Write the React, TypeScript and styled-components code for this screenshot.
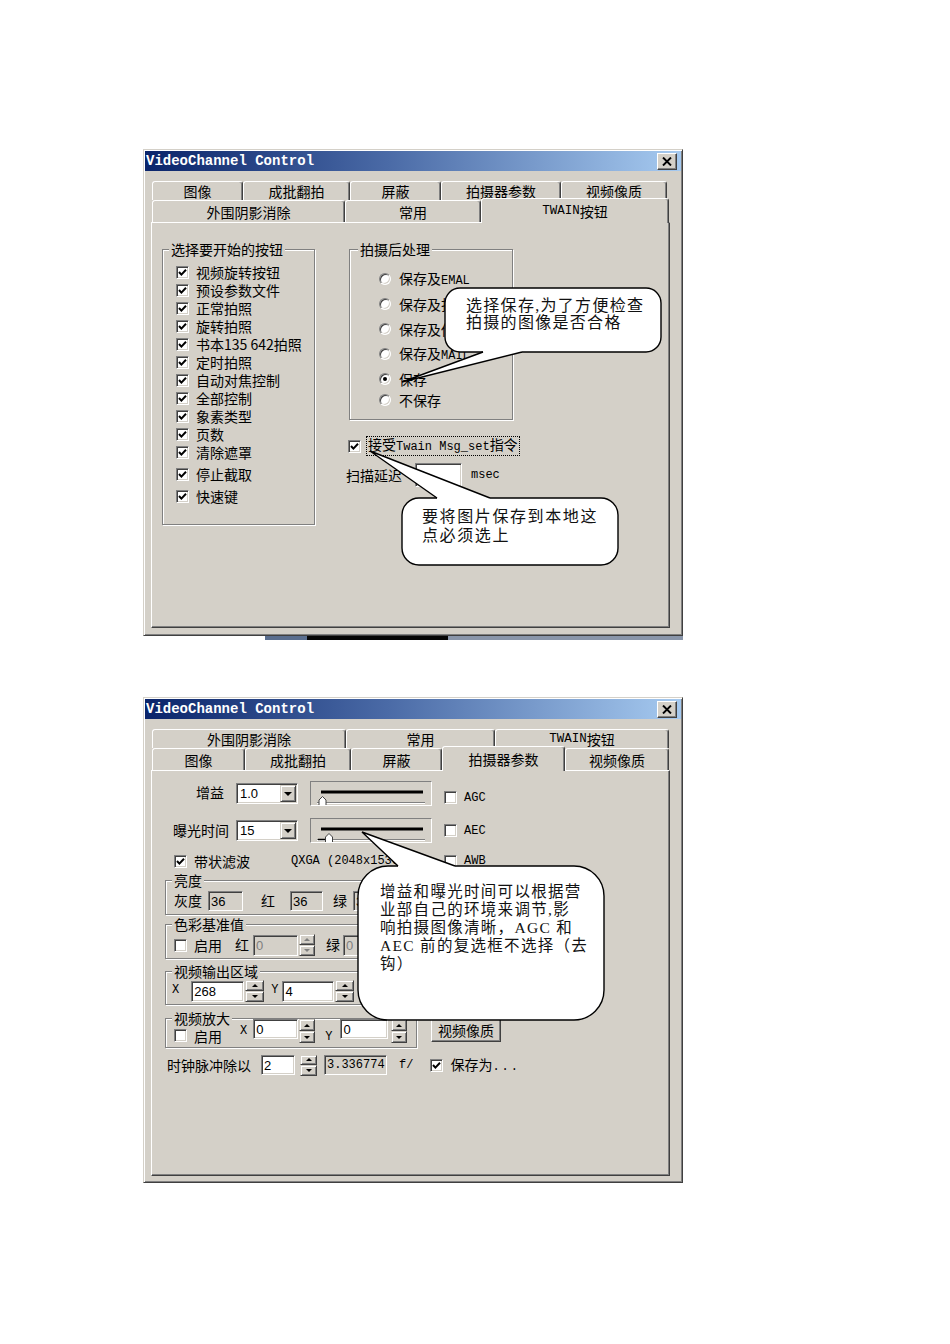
import React from "react";
import styled, { createGlobalStyle, css } from "styled-components";

const FACE = "#d4d0c8";
const SHADOW = "#808080";
const DARK = "#404040";
const UI_FONT = `"Noto Sans CJK SC", "Liberation Sans", sans-serif`;
const MONO_FONT = `"Liberation Mono", "Noto Sans CJK SC", monospace`;
const NOTE_FONT = `"Liberation Serif", "Noto Sans CJK SC", serif`;

type Sp = { $ml?: number; $mt?: number };
const spacing = css<Sp>`
  margin-left: ${(p) => p.$ml ?? 0}px;
  margin-top: ${(p) => p.$mt ?? 0}px;
`;

const GlobalStyle = createGlobalStyle`
  html, body { margin: 0; padding: 0; background: #ffffff; }
  body { font-family: ${UI_FONT}; font-size: 14px; color: #000; }
  * { box-sizing: border-box; }
`;

const Page = styled.div`
  width: 950px;
  min-height: 1344px;
  padding: 149px 0 0 143px;
  display: flex;
  flex-direction: column;
`;

const Shot = styled.div<{ $mt?: number }>`
  display: flex;
  flex-direction: column;
  width: 540px;
  margin-top: ${(p) => p.$mt ?? 0}px;
`;

const TaskStrip = styled.div`
  height: 4px;
  margin-left: 122px;
  width: 418px;
  background: linear-gradient(
    90deg,
    #5a6e8e 0 42px,
    #060606 42px 183px,
    #8a96aa 183px 100%
  );
`;

const Window = styled.div<{ $h: number }>`
  position: relative;
  width: 540px;
  height: ${(p) => p.$h}px;
  padding: 1px;
  background: ${FACE};
  border: 1px solid;
  border-color: ${FACE} ${DARK} ${DARK} ${FACE};
  box-shadow: inset 1px 1px #fff, inset -1px -1px ${SHADOW};
  display: flex;
  flex-direction: column;
`;

const TitleBar = styled.div`
  flex: none;
  height: 20px;
  display: flex;
  align-items: center;
  justify-content: space-between;
  padding: 0 4px 0 1px;
  background: linear-gradient(90deg, #0a246a 0%, #4a6aa6 45%, #a6caf0 100%);
`;

const TitleText = styled.span`
  font-family: "Liberation Mono", monospace;
  font-weight: bold;
  font-size: 14px;
  line-height: 20px;
  color: #fff;
  white-space: pre;
`;

const CloseButton = styled.span`
  width: 20px;
  height: 17px;
  background: ${FACE};
  border: 1px solid;
  border-color: #fff ${DARK} ${DARK} #fff;
  box-shadow: inset -1px -1px ${SHADOW};
  display: flex;
  align-items: center;
  justify-content: center;
`;

const Body = styled.div`
  flex: 1;
  display: flex;
  flex-direction: column;
  padding: 10px 10px 0 6px;
`;

const TabRow = styled.div<{ $h: number }>`
  flex: none;
  display: flex;
  align-items: flex-end;
  height: ${(p) => p.$h}px;
  padding-left: 1px;
`;

const Tab = styled.div<{ $w: number; $h: number; $selected?: boolean }>`
  flex: none;
  position: relative;
  z-index: ${(p) => (p.$selected ? 2 : 0)};
  width: ${(p) => p.$w}px;
  height: ${(p) => p.$h + (p.$selected ? 3 : 0)}px;
  margin-bottom: ${(p) => (p.$selected ? -1 : 0)}px;
  display: flex;
  align-items: center;
  justify-content: center;
  background: ${FACE};
  border-style: solid;
  border-width: 1px 1px 0 1px;
  border-color: #fff ${DARK} transparent #fff;
  border-radius: 3px 3px 0 0;
  box-shadow: inset -1px 0 ${SHADOW};
  font-size: 14px;
  line-height: 16px;
  white-space: nowrap;
`;

const Panel = styled.div`
  flex: none;
  width: 519px;
  height: 406px;
  border: 1px solid;
  border-color: #fff ${DARK} ${DARK} #fff;
  box-shadow: inset -1px -1px ${SHADOW};
`;

const Latin = styled.span<{ $size?: number; $ls?: number }>`
  font-family: ${MONO_FONT};
  font-size: ${(p) => p.$size ?? 12}px;
  letter-spacing: ${(p) => p.$ls ?? 0}px;
`;

const Label = styled.span<Sp & { $w?: number; $pr?: number }>`
  ${spacing}
  flex: none;
  ${(p) => (p.$w ? `width: ${p.$w}px; text-align: right;` : "")}
  padding-right: ${(p) => p.$pr ?? 0}px;
  font-size: 14px;
  line-height: 18px;
  white-space: nowrap;
`;

const Mono = styled.span<Sp>`
  ${spacing}
  flex: none;
  font-family: ${MONO_FONT};
  font-size: 12px;
  line-height: 16px;
  white-space: pre;
`;

const BoxFrame = styled.span<Sp>`
  ${spacing}
  flex: none;
  width: 13px;
  height: 13px;
  background: #fff;
  border: 1px solid;
  border-color: ${SHADOW} #fff #fff ${SHADOW};
  box-shadow: inset 1px 1px ${DARK}, inset -1px -1px ${FACE};
  display: inline-flex;
  align-items: center;
  justify-content: center;
`;

const RadioFrame = styled.span`
  flex: none;
  width: 12px;
  height: 12px;
  border-radius: 50%;
  background: #fff;
  border: 1px solid;
  border-color: ${SHADOW} #fff #fff ${SHADOW};
  box-shadow: inset 1px 1px ${DARK}, inset -1px -1px ${FACE};
  display: inline-flex;
  align-items: center;
  justify-content: center;
`;

const RadioDot = styled.span`
  width: 4px;
  height: 4px;
  border-radius: 50%;
  background: #000;
`;

const GroupBox = styled.div<Sp & { $w: number; $h?: number }>`
  ${spacing}
  flex: none;
  width: ${(p) => p.$w}px;
  ${(p) => (p.$h ? `height: ${p.$h}px;` : "")}
  border: 1px solid ${SHADOW};
  box-shadow: inset 1px 1px #fff, 1px 1px #fff;
  display: flex;
  flex-direction: column;
`;

const Caption = styled.div<{ $indent: number }>`
  align-self: flex-start;
  margin: -9px 0 -7px ${(p) => p.$indent}px;
  padding: 0 2px;
  background: ${FACE};
  font-size: 14px;
  line-height: 16px;
  white-space: nowrap;
`;

/* ---------- TWAIN page ---------- */

const TwainLayout = styled.div`
  display: flex;
  align-items: flex-start;
  gap: 31px;
  padding: 26px 0 0 10px;
`;

const CheckList = styled.div`
  display: flex;
  flex-direction: column;
  padding: 13px 0 0 13px;
`;

const ItemRow = styled.div<Sp & { $gap?: number }>`
  ${spacing}
  display: flex;
  align-items: center;
  height: 18px;
  gap: ${(p) => p.$gap ?? 7}px;
`;

const RadioList = styled.div`
  display: flex;
  flex-direction: column;
  gap: 7px;
  padding: 20px 0 0 29px;
`;

const SideColumn = styled.div`
  display: flex;
  flex-direction: column;
  align-items: flex-start;
`;

const FocusLabel = styled.span`
  font-size: 14px;
  line-height: 15px;
  padding: 0 1px;
  outline: 1px dotted #000;
  white-space: nowrap;
`;

const FieldRow = styled.div<Sp & { $h: number }>`
  ${spacing}
  display: flex;
  align-items: center;
  height: ${(p) => p.$h}px;
`;

const Field = styled.span<Sp & { $w: number; $h: number; $ro?: boolean; $dim?: boolean; $mono?: boolean }>`
  ${spacing}
  flex: none;
  display: inline-flex;
  align-items: center;
  width: ${(p) => p.$w}px;
  height: ${(p) => p.$h}px;
  padding-left: 2px;
  background: ${(p) => (p.$ro ? FACE : "#fff")};
  border: 1px solid;
  border-color: ${SHADOW} #fff #fff ${SHADOW};
  box-shadow: inset 1px 1px ${DARK}, inset -1px -1px ${FACE};
  font-family: ${(p) => (p.$mono ? MONO_FONT : `"Liberation Sans", sans-serif`)};
  font-size: ${(p) => (p.$mono ? 12 : 13)}px;
  color: ${(p) => (p.$dim ? SHADOW : "#000")};
  white-space: pre;
  overflow: hidden;
`;

/* ---------- Camera page ---------- */

const CameraLayout = styled.div`
  display: flex;
  flex-direction: column;
  align-items: flex-start;
  padding: 10px 0 0 13px;
`;

const ControlRow = styled.div<Sp & { $h: number }>`
  ${spacing}
  display: flex;
  align-items: center;
  height: ${(p) => p.$h}px;
`;

const Cell = styled.span<{ $w: number }>`
  flex: none;
  width: ${(p) => p.$w}px;
  display: flex;
  align-items: center;
  white-space: nowrap;
`;

const Combo = styled.span<Sp>`
  ${spacing}
  flex: none;
  width: 62px;
  height: 21px;
  display: flex;
  align-items: center;
  justify-content: space-between;
  background: #fff;
  border: 1px solid;
  border-color: ${SHADOW} #fff #fff ${SHADOW};
  box-shadow: inset 1px 1px ${DARK}, inset -1px -1px ${FACE};
  padding-left: 3px;
  font-family: "Liberation Sans", sans-serif;
  font-size: 13px;
`;

const raised = css`
  background: ${FACE};
  border: 1px solid;
  border-color: ${FACE} ${DARK} ${DARK} ${FACE};
  box-shadow: inset 1px 1px #fff, inset -1px -1px ${SHADOW};
`;

const DropButton = styled.span`
  ${raised}
  flex: none;
  width: 16px;
  height: 17px;
  margin-right: 1px;
  display: flex;
  align-items: center;
  justify-content: center;
  &::after {
    content: "";
    border-left: 4px solid transparent;
    border-right: 4px solid transparent;
    border-top: 4px solid #000;
  }
`;

const SliderFrame = styled.span<Sp>`
  ${spacing}
  flex: none;
  display: block;
  width: 122px;
  height: 25px;
  border: 1px solid;
  border-color: ${SHADOW} #fff #fff ${SHADOW};
  overflow: hidden;
`;

const TrackSvg = styled.svg`
  display: block;
`;

const SpinBox = styled.span<Sp & { $w: number; $h: number }>`
  ${spacing}
  flex: none;
  display: flex;
  flex-direction: column;
  width: ${(p) => p.$w}px;
  height: ${(p) => p.$h}px;
`;

const SpinHalf = styled.span<{ $dir: "up" | "down"; $off?: boolean }>`
  ${raised}
  flex: 1;
  display: flex;
  align-items: center;
  justify-content: center;
  &::after {
    content: "";
    border-left: 3px solid transparent;
    border-right: 3px solid transparent;
    border-${(p) => (p.$dir === "up" ? "bottom" : "top")}: 3px solid ${(p) => (p.$off ? SHADOW : "#000")};
  }
`;

const GroupRow = styled.div<{ $pt: number; $pb: number; $pl: number; $h: number; $top?: boolean }>`
  display: flex;
  align-items: ${(p) => (p.$top ? "flex-start" : "center")};
  height: ${(p) => p.$h + p.$pt + p.$pb}px;
  padding: ${(p) => `${p.$pt}px 0 ${p.$pb}px ${p.$pl}px`};
`;

const GroupAndButton = styled.div<Sp>`
  ${spacing}
  display: flex;
  align-items: flex-start;
`;

const PushButton = styled.span<Sp>`
  ${spacing}
  flex: none;
  width: 70px;
  height: 24px;
  display: flex;
  align-items: center;
  justify-content: center;
  background: ${FACE};
  border: 1px solid;
  border-color: #fff ${DARK} ${DARK} #fff;
  box-shadow: inset -1px -1px ${SHADOW};
  font-size: 14px;
`;

/* ---------- Callouts ---------- */

const CalloutLayer = styled.svg`
  position: absolute;
  left: 0;
  top: 0;
  width: 100%;
  height: 100%;
  overflow: visible;
  pointer-events: none;
  z-index: 5;
`;

const NoteText = styled.div<{ $x: number; $y: number; $size: number; $ls: number; $lh: number }>`
  position: absolute;
  left: ${(p) => p.$x}px;
  top: ${(p) => p.$y}px;
  z-index: 6;
  font-family: ${NOTE_FONT};
  font-size: ${(p) => p.$size}px;
  letter-spacing: ${(p) => p.$ls}px;
  line-height: ${(p) => p.$lh}px;
  white-space: pre;
  color: #111;
`;

type Bubble = {
  x: number;
  y: number;
  w: number;
  h: number;
  r: number;
  edge: "top" | "bottom";
  b1: number;
  b2: number;
  tx: number;
  ty: number;
};

function BubbleShape({ b }: { b: Bubble }) {
  const ey = b.edge === "top" ? b.y : b.y + b.h;
  const inward = b.edge === "top" ? 3 : -3;
  return (
    <g>
      <rect x={b.x} y={b.y} width={b.w} height={b.h} rx={b.r} ry={b.r} fill="#fff" stroke="#000" strokeWidth={1.4} />
      <polygon
        points={`${b.b1},${ey + inward} ${b.b1},${ey} ${b.tx},${b.ty} ${b.b2},${ey} ${b.b2},${ey + inward}`}
        fill="#fff"
      />
      <polyline
        points={`${b.b1},${ey} ${b.tx},${b.ty} ${b.b2},${ey}`}
        fill="none"
        stroke="#000"
        strokeWidth={1.4}
      />
    </g>
  );
}

/* ---------- small widgets ---------- */

function CheckMark() {
  return (
    <svg width="9" height="9" viewBox="0 0 9 9">
      <path d="M1 4 L3.4 6.6 L8 1.8" fill="none" stroke="#000" strokeWidth="2" />
    </svg>
  );
}

function Check({ on, ml, mt }: { on?: boolean; ml?: number; mt?: number }) {
  return (
    <BoxFrame $ml={ml} $mt={mt}>
      {on && <CheckMark />}
    </BoxFrame>
  );
}

function Radio({ on }: { on?: boolean }) {
  return <RadioFrame>{on && <RadioDot />}</RadioFrame>;
}

function CloseIcon() {
  return (
    <svg width="10" height="9" viewBox="0 0 10 9">
      <path d="M1 0.5 L9 8.5 M9 0.5 L1 8.5" stroke="#000" strokeWidth="1.9" />
    </svg>
  );
}

function Spinner({ w, h, ml, mt, off }: { w: number; h: number; ml?: number; mt?: number; off?: boolean }) {
  return (
    <SpinBox $w={w} $h={h} $ml={ml} $mt={mt}>
      <SpinHalf $dir="up" $off={off} />
      <SpinHalf $dir="down" $off={off} />
    </SpinBox>
  );
}

function Slider({ thumb, ml, mark }: { thumb: number; ml?: number; mark?: boolean }) {
  return (
    <SliderFrame $ml={ml}>
      <TrackSvg width="120" height="23" viewBox="0 0 120 23">
        <rect x="10" y="8.5" width="102" height="3" fill="#000" />
        <line x1="6" y1="20.5" x2="114" y2="20.5" stroke={SHADOW} />
        <line x1="6" y1="21.5" x2="114" y2="21.5" stroke="#fff" />
        {mark && <line x1="7" y1="20.5" x2={thumb - 4} y2="20.5" stroke="#000" strokeWidth="1.5" />}
        <path
          d={`M${thumb - 3.5} 23 V18 L${thumb} 14.5 L${thumb + 3.5} 18 V23`}
          fill="#fff"
          stroke={DARK}
          strokeWidth="1"
        />
      </TrackSvg>
    </SliderFrame>
  );
}

/* ---------- data ---------- */

type TabDef = { label: React.ReactNode; w: number; selected?: boolean };

const twainLabel = (
  <>
    <Latin $size={12.5}>TWAIN</Latin>按钮
  </>
);

const tabs1Back: TabDef[] = [
  { label: "图像", w: 91 },
  { label: "成批翻拍", w: 107 },
  { label: "屏蔽", w: 91 },
  { label: "拍摄器参数", w: 120 },
  { label: "视频像质", w: 106 },
];
const tabs1Front: TabDef[] = [
  { label: "外围阴影消除", w: 193 },
  { label: "常用", w: 136 },
  { label: twainLabel, w: 188, selected: true },
];
const tabs2Back: TabDef[] = [
  { label: "外围阴影消除", w: 194 },
  { label: "常用", w: 149 },
  { label: twainLabel, w: 174 },
];
const tabs2Front: TabDef[] = [
  { label: "图像", w: 93 },
  { label: "成批翻拍", w: 106 },
  { label: "屏蔽", w: 91 },
  { label: "拍摄器参数", w: 123, selected: true },
  { label: "视频像质", w: 104 },
];

const startButtons = [
  "视频旋转按钮",
  "预设参数文件",
  "正常拍照",
  "旋转拍照",
  "书本135 642拍照",
  "定时拍照",
  "自动对焦控制",
  "全部控制",
  "象素类型",
  "页数",
  "清除遮罩",
  "停止截取",
  "快速键",
];

const afterShot: { label: React.ReactNode; on?: boolean; mt?: number }[] = [
  { label: <>保存及<Latin>EMAL</Latin></> },
  { label: "保存及打印" },
  { label: "保存及传真" },
  { label: <>保存及<Latin>MAIL</Latin></> },
  { label: "保存", on: true },
  { label: "不保存", mt: -4 },
];

function Tabs({ back, front }: { back: TabDef[]; front: TabDef[] }) {
  return (
    <>
      <TabRow $h={19}>
        {back.map((t, i) => (
          <Tab key={i} $w={t.w} $h={19} $selected={t.selected}>
            {t.label}
          </Tab>
        ))}
      </TabRow>
      <TabRow $h={22}>
        {front.map((t, i) => (
          <Tab key={i} $w={t.w} $h={22} $selected={t.selected}>
            {t.label}
          </Tab>
        ))}
      </TabRow>
    </>
  );
}

function TitleRow() {
  return (
    <TitleBar>
      <TitleText>VideoChannel Control</TitleText>
      <CloseButton>
        <CloseIcon />
      </CloseButton>
    </TitleBar>
  );
}

function TwainDialog() {
  const b1: Bubble = { x: 301, y: 138, w: 216, h: 64, r: 15, edge: "bottom", b1: 339, b2: 378, tx: 258, ty: 232 };
  const b2: Bubble = { x: 258, y: 348, w: 216, h: 67, r: 17, edge: "top", b1: 293, b2: 346, tx: 226, ty: 301 };
  return (
    <Window $h={487}>
      <TitleRow />
      <Body>
        <Tabs back={tabs1Back} front={tabs1Front} />
        <Panel>
          <TwainLayout>
            <GroupBox $w={153} $h={276}>
              <Caption $indent={6}>选择要开始的按钮</Caption>
              <CheckList>
                {startButtons.map((t, i) => (
                  <ItemRow key={t} $mt={i >= 11 ? 4 : 0}>
                    <Check on />
                    <Label>{t}</Label>
                  </ItemRow>
                ))}
              </CheckList>
            </GroupBox>
            <SideColumn>
              <GroupBox $w={164} $h={171} $ml={3}>
                <Caption $indent={8}>拍摄后处理</Caption>
                <RadioList>
                  {afterShot.map((r, i) => (
                    <ItemRow key={i} $gap={8} $mt={r.mt}>
                      <Radio on={r.on} />
                      <Label>{r.label}</Label>
                    </ItemRow>
                  ))}
                </RadioList>
              </GroupBox>
              <ItemRow $mt={17} $ml={2} $gap={6}>
                <Check on />
                <FocusLabel>
                  接受<Latin>Twain Msg_set</Latin>指令
                </FocusLabel>
              </ItemRow>
              <FieldRow $h={24} $mt={8}>
                <Label>扫描延迟</Label>
                <Field $w={47} $h={24} $ml={13}>0</Field>
                <Mono $ml={9}>msec</Mono>
              </FieldRow>
            </SideColumn>
          </TwainLayout>
        </Panel>
      </Body>
      <CalloutLayer>
        <BubbleShape b={b1} />
        <BubbleShape b={b2} />
      </CalloutLayer>
      <NoteText $x={322} $y={147} $size={16} $ls={1.3} $lh={17}>
        {"选择保存,为了方便检查\n拍摄的图像是否合格"}
      </NoteText>
      <NoteText $x={278} $y={357} $size={16} $ls={1.6} $lh={19}>
        {"要将图片保存到本地这\n点必须选上"}
      </NoteText>
    </Window>
  );
}

function CameraDialog() {
  const b3: Bubble = { x: 214, y: 168, w: 246, h: 154, r: 30, edge: "top", b1: 254, b2: 311, tx: 218, ty: 134 };
  return (
    <Window $h={486}>
      <TitleRow />
      <Body>
        <Tabs back={tabs2Back} front={tabs2Front} />
        <Panel>
          <CameraLayout>
            <ControlRow $h={25}>
              <Label $w={64} $pr={5} $mt={-3}>增益</Label>
              <Combo $ml={7}>
                1.0
                <DropButton />
              </Combo>
              <Slider thumb={11.5} ml={12} />
              <Check ml={12} mt={8} />
              <Mono $ml={7} $mt={8}>AGC</Mono>
            </ControlRow>
            <ControlRow $h={25} $mt={12}>
              <Label $w={64} $mt={-2}>曝光时间</Label>
              <Combo $ml={7}>
                15
                <DropButton />
              </Combo>
              <Slider thumb={18} ml={12} mark />
              <Check ml={12} />
              <Mono $ml={7}>AEC</Mono>
            </ControlRow>
            <ControlRow $h={18} $mt={9} $ml={9}>
              <Cell $w={117}>
                <Check on />
                <Label $ml={7}>带状滤波</Label>
              </Cell>
              <Cell $w={153}>
                <Mono>QXGA (2048x1536)</Mono>
              </Cell>
              <Check />
              <Mono $ml={7}>AWB</Mono>
            </ControlRow>

            <GroupBox $w={252} $mt={10}>
              <Caption $indent={6}>亮度</Caption>
              <GroupRow $pt={10} $pb={3} $pl={8} $h={20}>
                <Label $mt={-3}>灰度</Label>
                <Field $w={35} $h={20} $ml={6} $ro>36</Field>
                <Label $ml={18} $mt={-3}>红</Label>
                <Field $w={33} $h={20} $ml={15} $ro>36</Field>
                <Label $ml={10} $mt={-3}>绿</Label>
                <Field $w={40} $h={20} $ml={6} $ro>36</Field>
              </GroupRow>
            </GroupBox>

            <GroupBox $w={252} $mt={9}>
              <Caption $indent={6}>色彩基准值</Caption>
              <GroupRow $pt={9} $pb={2} $pl={8} $h={22}>
                <Check />
                <Label $ml={7}>启用</Label>
                <Label $ml={13} $mt={-3}>红</Label>
                <Field $w={45} $h={21} $ml={4} $ro $dim>0</Field>
                <Spinner w={16} h={22} ml={1} off />
                <Label $ml={11} $mt={-3}>绿</Label>
                <Field $w={45} $h={21} $ml={3} $ro $dim>0</Field>
              </GroupRow>
            </GroupBox>

            <GroupBox $w={252} $mt={12}>
              <Caption $indent={6}>视频输出区域</Caption>
              <GroupRow $pt={8} $pb={2} $pl={6} $h={22}>
                <Mono $mt={-3}>X</Mono>
                <Field $w={53} $h={21} $ml={12}>268</Field>
                <Spinner w={19} h={22} ml={1} />
                <Mono $ml={7} $mt={-3}>Y</Mono>
                <Field $w={52} $h={21} $ml={4}>4</Field>
                <Spinner w={19} h={22} ml={1} />
              </GroupRow>
            </GroupBox>

            <GroupAndButton $mt={13}>
              <GroupBox $w={252}>
                <Caption $indent={6}>视频放大</Caption>
                <GroupRow $pt={0} $pb={4} $pl={8} $h={24} $top>
                  <Check mt={10} />
                  <Label $ml={7} $mt={8}>启用</Label>
                  <Mono $ml={18} $mt={4}>X</Mono>
                  <Field $w={45} $h={20} $ml={6}>0</Field>
                  <Spinner w={16} h={24} ml={1} />
                  <Mono $ml={10} $mt={10}>Y</Mono>
                  <Field $w={48} $h={20} $ml={8}>0</Field>
                  <Spinner w={16} h={24} ml={3} />
                </GroupRow>
              </GroupBox>
              <PushButton $ml={14}>视频像质</PushButton>
            </GroupAndButton>

            <ControlRow $h={22} $mt={6} $ml={2}>
              <Label>时钟脉冲除以</Label>
              <Field $w={34} $h={20} $ml={10}>2</Field>
              <Spinner w={17} h={21} ml={5} />
              <Field $w={63} $h={20} $ml={7} $ro $mono>3.336774</Field>
              <Mono $ml={12}>f/</Mono>
              <Check on ml={17} />
              <Label $ml={7}>
                保存为<Latin $ls={2}>...</Latin>
              </Label>
            </ControlRow>
          </CameraLayout>
        </Panel>
      </Body>
      <CalloutLayer>
        <BubbleShape b={b3} />
      </CalloutLayer>
      <NoteText $x={236} $y={185} $size={15.5} $ls={1.3} $lh={18}>
        {"增益和曝光时间可以根据营\n业部自己的环境来调节,影\n响拍摄图像清晰，AGC 和\nAEC 前的复选框不选择（去\n钩）"}
      </NoteText>
    </Window>
  );
}

export default function App() {
  return (
    <>
      <GlobalStyle />
      <Page>
        <Shot>
          <TwainDialog />
          <TaskStrip />
        </Shot>
        <Shot $mt={57}>
          <CameraDialog />
        </Shot>
      </Page>
    </>
  );
}
